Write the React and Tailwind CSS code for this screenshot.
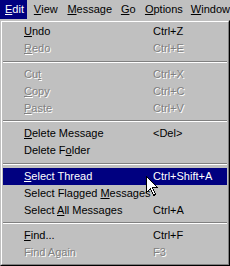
const menuBar = [
  { key: "E", rest: "dit", cls: "w-[28px] pl-[5px] bg-[#000080] text-white" },
  { key: "V", rest: "iew", cls: "w-[36px] pl-[7px]" },
  { key: "M", rest: "essage", cls: "w-[56px] pl-[6px]" },
  { key: "G", rest: "o", cls: "w-[25px] pl-[6px]" },
  { key: "O", rest: "ptions", cls: "w-[48px] pl-[6px]" },
  { key: "W", rest: "indow", cls: "flex-1 pl-[6px]" },
];

const entries = [
  { label: ["", "U", "ndo"], keys: "Ctrl+Z" },
  { label: ["", "R", "edo"], keys: "Ctrl+E", disabled: true },
  { sep: "h-[9px]" },
  { label: ["Cu", "t", ""], keys: "Ctrl+X", disabled: true },
  { label: ["", "C", "opy"], keys: "Ctrl+C", disabled: true },
  { label: ["", "P", "aste"], keys: "Ctrl+V", disabled: true },
  { sep: "h-[8px]" },
  { label: ["", "D", "elete Message"], keys: "<Del>" },
  { label: ["Delete F", "o", "lder"], keys: "" },
  { sep: "h-[9px]" },
  { label: ["", "S", "elect Thread"], keys: "Ctrl+Shift+A", active: true },
  { label: ["Select Flagged ", "M", "essages"], keys: "" },
  { label: ["Select ", "A", "ll Messages"], keys: "Ctrl+A" },
  { sep: "h-[8px]" },
  { label: ["", "F", "ind..."], keys: "Ctrl+F" },
  { label: ["Find Again", "", ""], keys: "F3", disabled: true },
];

function MenuRow({ item }) {
  const [before, mnemonic, after] = item.label;
  let tone = "text-black";
  if (item.active) tone = "bg-[#000080] text-white";
  if (item.disabled) tone = "text-[#808080] [text-shadow:1px_1px_0_#ffffff]";

  return (
    <div className={`flex h-[17px] items-center ${tone}`}>
      <div className="w-[150px] pl-[21px] whitespace-nowrap">
        {before}
        {mnemonic && <span className="underline underline-offset-[1px]">{mnemonic}</span>}
        {after}
      </div>
      <div className="whitespace-nowrap">{item.keys}</div>
    </div>
  );
}

function Separator({ h }) {
  return (
    <div className={`flex ${h} flex-col justify-center px-[0px]`}>
      <div className="h-px bg-[#808080]" />
      <div className="h-px bg-white" />
    </div>
  );
}

export default function App() {
  return (
    <div
      className="relative h-[266px] w-[230px] overflow-hidden bg-[#c0c0c0] text-[11px] leading-none text-black"
      style={{ fontFamily: '"Liberation Sans", Arial, sans-serif' }}
    >
      <div className="flex h-[20px] items-start">
        {menuBar.map((m) => (
          <div key={m.key} className={`flex h-[19px] items-center whitespace-nowrap ${m.cls}`}>
            <span className="underline underline-offset-[1px]">{m.key}</span>
            {m.rest}
          </div>
        ))}
      </div>

      <div className="h-[246px] w-[230px] border border-t-[#c0c0c0] border-l-[#c0c0c0] border-r-black border-b-black">
        <div className="h-full border border-t-white border-l-white border-r-[#808080] border-b-[#808080] px-px pt-px">
          {entries.map((item, i) =>
            item.sep ? <Separator key={i} h={item.sep} /> : <MenuRow key={i} item={item} />
          )}
        </div>
      </div>

      <svg
        className="absolute left-[146px] top-[176px]"
        width="13"
        height="21"
        viewBox="0 0 13 21"
        shapeRendering="crispEdges"
      >
        <path
          d="M0.5 0.5 L0.5 16.5 L4.5 12.5 L7.5 19.5 L9.5 18.5 L6.5 11.5 L11.5 11.5 Z"
          fill="#ffffff"
          stroke="#000000"
          strokeWidth="1"
        />
      </svg>
    </div>
  );
}
